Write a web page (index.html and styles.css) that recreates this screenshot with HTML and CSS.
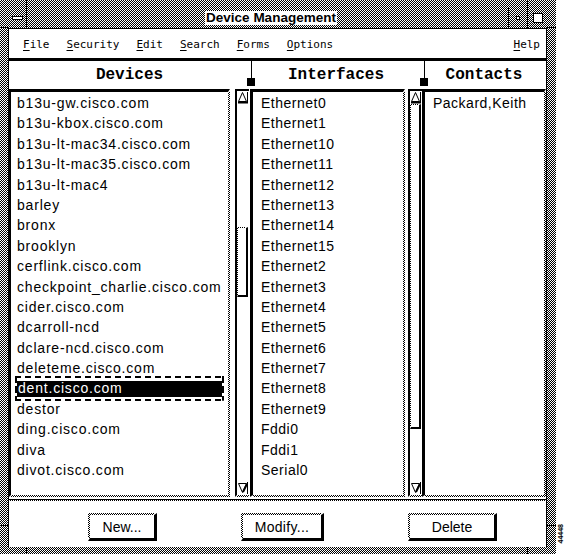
FILE: index.html
```html
<!DOCTYPE html>
<html lang="en">
<head>
    <meta charset="UTF-8">
    <title>Device Management</title>
    <link rel="stylesheet" href="styles.css">
</head>
<body>
    <div class="frame">
        <span class="mark mark-top-l"></span>
        <span class="mark mark-top-r"></span>
        <span class="mark mark-left-t"></span>
        <span class="mark mark-left-b"></span>
        <span class="mark mark-right-t"></span>
        <span class="mark mark-right-b"></span>
        <span class="mark mark-bot-l"></span>
        <span class="mark mark-bot-r"></span>

        <div class="titlebar">
            <div class="tb-btn menu-btn"><span class="bar"></span></div>
            <div class="title"><span>Device Management</span></div>
            <div class="tb-btn min-btn"><span class="dot"></span></div>
            <div class="tb-btn max-btn"><span class="sq"></span></div>
        </div>

        <div class="client">
            <div class="menubar">
                <span><span class="u">F</span>ile</span>
                <span><span class="u">S</span>ecurity</span>
                <span><span class="u">E</span>dit</span>
                <span><span class="u">S</span>earch</span>
                <span><span class="u">F</span>orms</span>
                <span><span class="u">O</span>ptions</span>
                <span class="help"><span class="u">H</span>elp</span>
            </div>

            <div class="panes">
                <!-- devices -->
                <div class="pane pane-devices">
                    <div class="pane-head">Devices</div>
                    <div class="pane-body">
                        <ul class="list list-devices">
                            <li>b13u-gw.cisco.com</li>
                            <li>b13u-kbox.cisco.com</li>
                            <li>b13u-lt-mac34.cisco.com</li>
                            <li>b13u-lt-mac35.cisco.com</li>
                            <li>b13u-lt-mac4</li>
                            <li>barley</li>
                            <li>bronx</li>
                            <li>brooklyn</li>
                            <li>cerflink.cisco.com</li>
                            <li>checkpoint_charlie.cisco.com</li>
                            <li>cider.cisco.com</li>
                            <li>dcarroll-ncd</li>
                            <li>dclare-ncd.cisco.com</li>
                            <li>deleteme.cisco.com</li>
                            <li class="selected">dent.cisco.com</li>
                            <li>destor</li>
                            <li>ding.cisco.com</li>
                            <li>diva</li>
                            <li>divot.cisco.com</li>
                        </ul>
                        <div class="vscroll vscroll-devices">
                            <div class="arrow">
                                <svg width="12" height="13" viewBox="0 0 12 13"><path d="M5.5 1.5 L1.5 10.5 H9.5 Z" fill="#fff" stroke="#000"/><path d="M1 11.5 H11" stroke="#000" stroke-width="2"/><path d="M10.5 1 V12" stroke="#000"/></svg>
                            </div>
                            <div class="track">
                                <div class="slider" style="margin-top:123px;height:70px"></div>
                            </div>
                            <div class="arrow">
                                <svg width="12" height="13" viewBox="0 0 12 13"><path d="M1.5 1.5 H9.5 L5.5 10.5 Z" fill="#fff" stroke="#000"/><path d="M6 10 L10 2" stroke="#000" stroke-width="2"/><path d="M10.5 0 V12" stroke="#000"/></svg>
                            </div>
                        </div>
                    </div>
                </div>

                <!-- interfaces -->
                <div class="pane pane-interfaces">
                    <span class="sash"></span>
                    <div class="pane-head">Interfaces</div>
                    <div class="pane-body">
                        <ul class="list list-interfaces">
                            <li>Ethernet0</li>
                            <li>Ethernet1</li>
                            <li>Ethernet10</li>
                            <li>Ethernet11</li>
                            <li>Ethernet12</li>
                            <li>Ethernet13</li>
                            <li>Ethernet14</li>
                            <li>Ethernet15</li>
                            <li>Ethernet2</li>
                            <li>Ethernet3</li>
                            <li>Ethernet4</li>
                            <li>Ethernet5</li>
                            <li>Ethernet6</li>
                            <li>Ethernet7</li>
                            <li>Ethernet8</li>
                            <li>Ethernet9</li>
                            <li>Fddi0</li>
                            <li>Fddi1</li>
                            <li>Serial0</li>
                        </ul>
                        <div class="vscroll vscroll-interfaces">
                            <div class="arrow">
                                <svg width="12" height="13" viewBox="0 0 12 13"><path d="M5.5 1.5 L1.5 10.5 H9.5 Z" fill="#fff" stroke="#000"/><path d="M1 11.5 H11" stroke="#000" stroke-width="2"/><path d="M10.5 1 V12" stroke="#000"/></svg>
                            </div>
                            <div class="track">
                                <div class="slider" style="margin-top:0;height:325px"></div>
                            </div>
                            <div class="arrow">
                                <svg width="12" height="13" viewBox="0 0 12 13"><path d="M1.5 1.5 H9.5 L5.5 10.5 Z" fill="#fff" stroke="#000"/><path d="M6 10 L10 2" stroke="#000" stroke-width="2"/><path d="M10.5 0 V12" stroke="#000"/></svg>
                            </div>
                        </div>
                    </div>
                </div>

                <!-- contacts -->
                <div class="pane pane-contacts">
                    <span class="sash sash-contacts"></span>
                    <div class="pane-head">Contacts</div>
                    <div class="pane-body">
                        <ul class="list list-contacts">
                            <li>Packard,Keith</li>
                        </ul>
                    </div>
                </div>
            </div>

            <div class="sep"></div>

            <div class="buttons">
                <button class="btn btn-new">New...</button>
                <button class="btn btn-modify">Modify...</button>
                <button class="btn btn-delete">Delete</button>
            </div>
        </div>
    </div>
    <div class="fignum">44448</div>
</body>
</html>
```

FILE: styles.css
```css
* {
    box-sizing: border-box;
}
body {
    margin: 0;
    background: #fff;
    font-family: "Liberation Sans", Arial, sans-serif;
    color: #000;
    position: relative;
}

/* window frame, 1px checker dither like the X server gray */
.frame {
    position: relative;
    width: 556px;
    height: 554px;
    padding: 0 9px 7px 8px;
    display: flex;
    flex-direction: column;
    background: repeating-conic-gradient(#000 0 25%, #fff 0 50%) 0 0 / 2px 2px;
}
.mark {
    position: absolute;
    background: #000;
}
.mark-top-l { left: 26px; top: 0; width: 1px; height: 8px; }
.mark-top-r { left: 527px; top: 0; width: 1px; height: 8px; }
.mark-bot-l { left: 26px; top: 547px; width: 1px; height: 7px; }
.mark-bot-r { left: 527px; top: 547px; width: 1px; height: 7px; }
.mark-left-t { left: 0; top: 27px; width: 8px; height: 1px; }
.mark-left-b { left: 0; top: 525px; width: 8px; height: 1px; }
.mark-right-t { left: 547px; top: 27px; width: 9px; height: 1px; }
.mark-right-b { left: 547px; top: 525px; width: 9px; height: 1px; }

.titlebar {
    height: 28px;
    padding-top: 8px;
    display: flex;
}
.tb-btn {
    width: 19px;
    display: flex;
    align-items: center;
    justify-content: center;
}
.menu-btn {
    border-right: 1px solid #000;
}
.menu-btn .bar {
    width: 11px;
    height: 4px;
    background: #fff;
    border: 1px solid #000;
}
.title {
    flex: 1;
    display: flex;
    align-items: center;
    justify-content: center;
    padding-left: 7px;
}
.title span {
    background: #fff;
    font-weight: bold;
    font-size: 13.5px;
    line-height: 14px;
    padding: 0 1px;
}
.min-btn {
    border-left: 1px solid #000;
}
.min-btn .dot {
    width: 4px;
    height: 4px;
    background: #fff;
    border: 1px solid #000;
}
.max-btn {
    width: 20px;
    border-left: 1px solid #000;
}
.max-btn .sq {
    width: 10px;
    height: 10px;
    background: #fff;
    border: 1px solid #000;
}

.client {
    flex: 1;
    display: flex;
    flex-direction: column;
    background: #fff;
    border: 1px solid #000;
    border-bottom: 0;
}

.menubar {
    height: 32px;
    border-bottom: 3px solid #000;
    display: flex;
    align-items: center;
    gap: 17px;
    padding: 1px 6px 0 14px;
    font-family: "DejaVu Sans Mono", monospace;
    font-size: 11px;
}
.menubar .help {
    margin-left: auto;
}
.u {
    text-decoration: underline;
    text-underline-offset: 2px;
}

.panes {
    display: flex;
    height: 436px;
}
.pane {
    position: relative;
    display: flex;
    flex-direction: column;
}
.pane-devices { width: 241px; }
.pane-interfaces { width: 172px; }
.pane-contacts { flex: 1; }

.pane-head {
    height: 28px;
    display: flex;
    align-items: center;
    justify-content: center;
    font-family: "Liberation Mono", monospace;
    font-weight: bold;
    font-size: 16px;
}
.pane-body {
    flex: 1;
    display: flex;
}

/* paned window sash */
.sash {
    position: absolute;
    left: 1px;
    top: 0;
    width: 1px;
    height: 17px;
    background: #000;
}
.sash::after {
    content: "";
    position: absolute;
    left: -4px;
    top: 17px;
    width: 8px;
    height: 8px;
    background: #000;
}
.sash-contacts {
    left: 2px;
}

.list {
    list-style: none;
    margin: 0;
    padding: 1px 0 0;
    overflow: hidden;
    border-style: solid;
    border-width: 3px 2px 2px 3px;
    border-color: #000 transparent transparent #000;
    background: linear-gradient(#fff, #fff) padding-box,
        repeating-conic-gradient(#000 0 25%, #fff 0 50%) 0 0 / 2px 2px border-box;
    font-size: 14px;
    letter-spacing: 0.5px;
    white-space: nowrap;
}
.list li {
    height: 20.4px;
    line-height: 20.4px;
    padding-left: 8px;
}
.list-devices {
    width: 221px;
    border-left-width: 2px;
    letter-spacing: 0.8px;
}
.list-devices li {
    padding-left: 6px;
}
.list-interfaces {
    width: 155px;
}
.list-contacts {
    flex: 1;
}
.list li.selected {
    position: relative;
    margin: 0 6px;
    padding-left: 1px;
    color: #fff;
    background: linear-gradient(#000, #000) center / 100% 16px no-repeat;
}
.list li.selected::after {
    content: "";
    position: absolute;
    left: -2px;
    right: -2px;
    top: -2px;
    bottom: -2px;
    background:
        repeating-linear-gradient(90deg, #000 0 6px, transparent 6px 10px) top / 100% 2px no-repeat,
        repeating-linear-gradient(90deg, #000 0 6px, transparent 6px 10px) bottom / 100% 2px no-repeat,
        repeating-linear-gradient(180deg, #000 0 7px, transparent 7px 10px) left / 2px 100% no-repeat,
        repeating-linear-gradient(180deg, #000 0 7px, transparent 7px 10px) right / 2px 100% no-repeat;
}

.vscroll {
    width: 14px;
    display: flex;
    flex-direction: column;
    border-style: solid;
    border-width: 2px 0 2px 2px;
    border-color: #000 transparent transparent #000;
    background: linear-gradient(#fff, #fff) padding-box,
        repeating-conic-gradient(#000 0 25%, #fff 0 50%) 0 0 / 2px 2px border-box;
}
.vscroll-devices {
    margin: 0 1px 0 5px;
}
.vscroll-interfaces {
    margin-left: 3px;
}
.arrow {
    height: 13px;
}
.arrow svg {
    display: block;
}
.track {
    flex: 1;
    padding-right: 1px;
}
.slider {
    border-style: solid;
    border-width: 1px 2px 2px 1px;
    border-color: transparent #000 #000 transparent;
    background: linear-gradient(#fff, #fff) padding-box,
        repeating-conic-gradient(#000 0 25%, #fff 0 50%) 0 0 / 2px 2px border-box;
}

.sep {
    margin-top: 2px;
    height: 2px;
    border-top: 1px solid #000;
    background: repeating-conic-gradient(#000 0 25%, #fff 0 50%) 0 0 / 2px 2px;
}

.buttons {
    height: 46px;
    display: flex;
    align-items: flex-start;
    padding: 12px 0 0 79px;
    gap: 84px;
}
.btn {
    height: 28px;
    padding: 0;
    margin: 0;
    color: #000;
    font-family: "Liberation Sans", Arial, sans-serif;
    font-size: 14px;
    border-style: solid;
    border-width: 2px 3px 3px 2px;
    border-color: transparent #000 #000 transparent;
    border-radius: 0;
    background: linear-gradient(#fff, #fff) padding-box,
        repeating-conic-gradient(#000 0 25%, #fff 0 50%) 0 0 / 2px 2px border-box;
}
.btn-new { width: 69px; }
.btn-modify { width: 83px; letter-spacing: 0.3px; }
.btn-delete { width: 89px; }

.fignum {
    position: absolute;
    left: 557px;
    top: 524px;
    writing-mode: vertical-rl;
    transform: rotate(180deg);
    font-size: 7px;
    font-weight: bold;
    line-height: 7px;
}
```
